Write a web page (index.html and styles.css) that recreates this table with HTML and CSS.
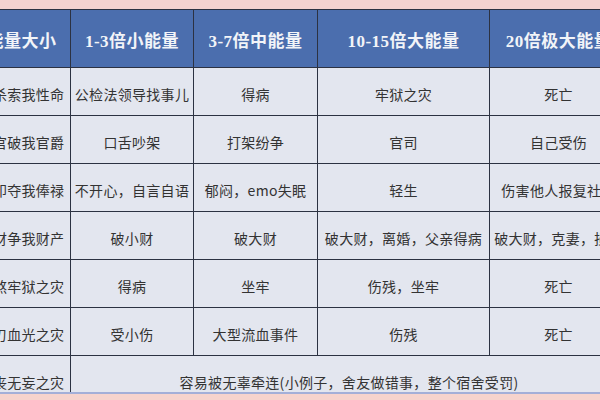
FILE: index.html
```html
<!DOCTYPE html>
<html>
<head>
<meta charset="utf-8">
<link rel="stylesheet" href="styles.css">
</head>
<body>
<div class="page">
  <div class="top-strip"></div>
  <table class="energy">
    <colgroup>
      <col class="c1"><col class="c2"><col class="c3"><col class="c4"><col class="c5">
    </colgroup>
    <thead>
      <tr>
        <th>能量大小</th>
        <th>1-3倍小能量</th>
        <th>3-7倍中能量</th>
        <th>10-15倍大能量</th>
        <th>20倍极大能量</th>
      </tr>
    </thead>
    <tbody>
      <tr><td>七杀索我性命</td><td>公检法领导找事儿</td><td>得病</td><td>牢狱之灾</td><td>死亡</td></tr>
      <tr><td>伤官破我官爵</td><td>口舌吵架</td><td>打架纷争</td><td>官司</td><td>自己受伤</td></tr>
      <tr><td>枭印夺我俸禄</td><td>不开心，自言自语</td><td>郁闷，emo失眠</td><td>轻生</td><td>伤害他人报复社会</td></tr>
      <tr><td>劫财争我财产</td><td>破小财</td><td>破大财</td><td>破大财，离婚，父亲得病</td><td>破大财，克妻，损子</td></tr>
      <tr><td>官煞牢狱之灾</td><td>得病</td><td>坐牢</td><td>伤残，坐牢</td><td>死亡</td></tr>
      <tr><td>羊刃血光之灾</td><td>受小伤</td><td>大型流血事件</td><td>伤残</td><td>死亡</td></tr>
      <tr class="last"><td>天丧无妄之灾</td><td colspan="4">容易被无辜牵连(小例子，舍友做错事，整个宿舍受罚)</td></tr>
    </tbody>
  </table>
  <div class="bottom-strip"></div>
</div>
</body>
</html>
```

FILE: styles.css
```css
html, body {
  margin: 0;
  padding: 0;
}
body {
  width: 600px;
  height: 400px;
  overflow: hidden;
  background: #e3e6ef;
}
.page {
  position: relative;
  width: 600px;
  height: 400px;
  overflow: hidden;
}
.top-strip {
  height: 9px;
  background: #f4d2d0;
}
.energy {
  margin-left: -28px;
  border-collapse: collapse;
  table-layout: fixed;
  width: 655px;
}
.c1 { width: 98px; }
.c2 { width: 123px; }
.c3 { width: 124px; }
.c4 { width: 172px; }
.c5 { width: 138px; }
.energy th,
.energy td {
  box-sizing: border-box;
  border: 1px solid #2c3242;
  text-align: center;
  white-space: nowrap;
  overflow: visible;
  padding: 0;
}
.energy th {
  height: 58px;
  background: #4b6eae;
  color: #f2f4f8;
  font-family: "Liberation Serif", "Noto Sans CJK SC", serif;
  font-weight: bold;
  font-size: 17px;
  letter-spacing: 0.5px;
  padding-top: 2px;
}
.energy td {
  height: 48px;
  background: #e3e6ef;
  color: #333;
  font-family: "Noto Sans CJK SC", "Noto Sans", sans-serif;
  font-size: 14px;
  letter-spacing: 0.3px;
  padding-top: 4px;
}
.energy tr.last td {
  height: 52px;
  padding-top: 0;
  border-bottom: none;
}
.bottom-strip {
  position: absolute;
  left: 0;
  right: 0;
  bottom: 0;
  height: 6px;
  background: #f6d3cd;
  border-top: 2px solid #a3afd8;
}
```
